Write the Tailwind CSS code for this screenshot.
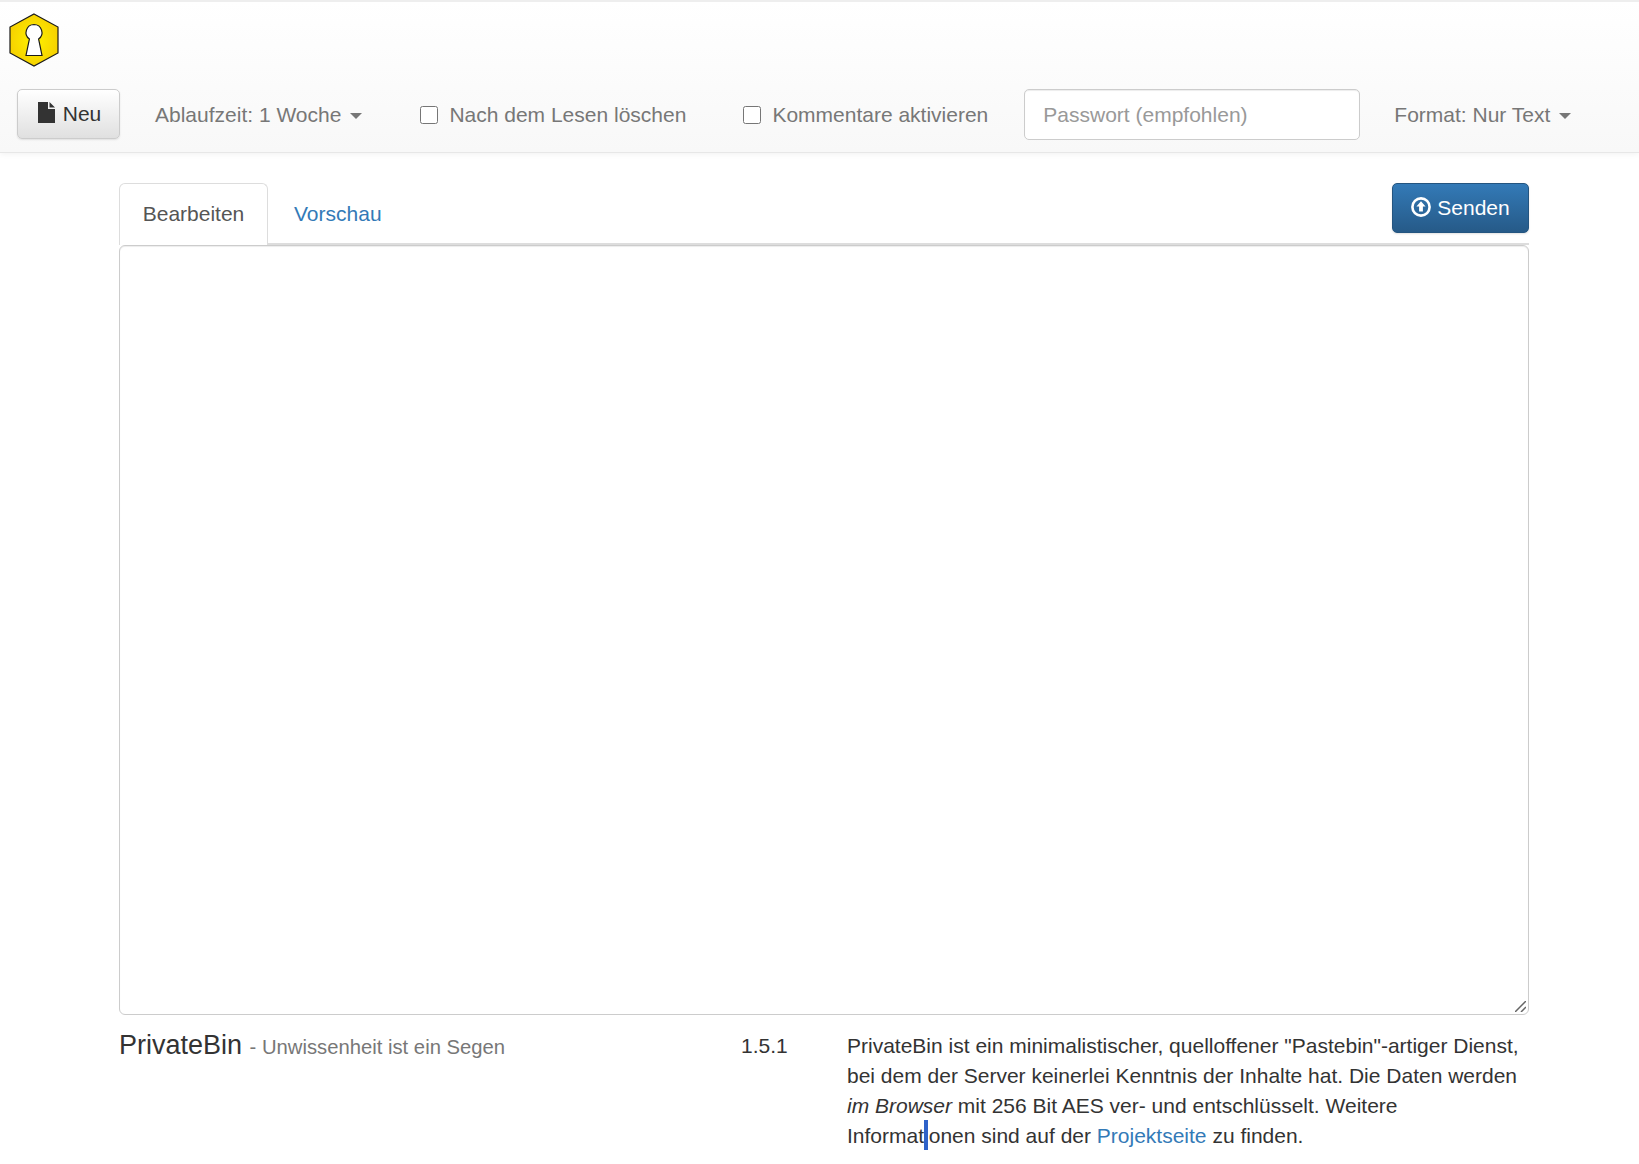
<!DOCTYPE html>
<html lang="de">
<head>
  <meta charset="UTF-8" />
  <meta name="viewport" content="width=device-width, initial-scale=1.0"/>
  <title>PrivateBin</title>
  <script src="https://cdn.jsdelivr.net/npm/@tailwindcss/browser@4"></script>
</head>
<body class="bg-white text-[#333] font-['Liberation_Sans',Arial,sans-serif] text-[21px] leading-[30px] h-[1164px] overflow-hidden">

  <!-- Navbar -->
  <nav class="h-[153px] border-t-2 border-b border-t-[#eeeeee] border-b-[#e7e7e7] bg-gradient-to-b from-white to-[#f8f8f8] shadow-[0_1px_6px_rgba(0,0,0,0.06)]">
    <!-- Logo -->
    <div class="h-[87px] pl-[9px] pt-[11px]">
      <svg width="50" height="54" viewBox="0 0 50 54">
        <defs>
          <radialGradient id="hex" cx="50%" cy="50%" r="55%">
            <stop offset="0%" stop-color="#fff200"/>
            <stop offset="100%" stop-color="#f5cf00"/>
          </radialGradient>
        </defs>
        <polygon points="25,1 49,14 49,40 25,53 1,40 1,14" fill="url(#hex)" stroke="#1a1a1a" stroke-width="1.2"/>
        <path d="M25 11.5a8 8 0 0 1 4.6 14.5L33 42.5H17L20.4 26A8 8 0 0 1 25 11.5z" fill="#fff" stroke="#1a1a1a" stroke-width="1.2"/>
      </svg>
    </div>

    <!-- Controls -->
    <div class="flex items-center h-[51px] text-[#777]">
      <button class="ml-[17px] self-start w-[103px] h-[50px] pl-[2px] flex items-center justify-center gap-[8px] rounded-[5px] border border-[#ccc] bg-gradient-to-b from-white to-[#e0e0e0] text-[#333] shadow-[0_1px_2px_rgba(0,0,0,0.1)]">
        <svg width="17" height="21" viewBox="0 0 17 21" class="-mt-[3px]"><path d="M0 0h10v7h7v14H0z M11.5 0L17 5.5h-5.5z" fill="#333"/></svg>
        Neu
      </button>
      <span class="ml-[35px] flex items-center">Ablaufzeit: 1 Woche<span class="ml-[9px] mt-[2px] border-x-[6px] border-t-[6px] border-x-transparent border-t-[#777]"></span></span>
      <label class="ml-[58px] flex items-center gap-[11px]"><input type="checkbox" class="w-[18px] h-[18px]" />Nach dem Lesen löschen</label>
      <label class="ml-[57px] flex items-center gap-[11px]"><input type="checkbox" class="w-[18px] h-[18px]" />Kommentare aktivieren</label>
      <input type="text" placeholder="Passwort (empfohlen)" class="ml-[36px] w-[336px] h-[51px] px-[18px] bg-white rounded-[5px] border border-[#ccc] shadow-[inset_0_1px_1px_rgba(0,0,0,0.075)] placeholder:text-[#999] placeholder:opacity-100" />
      <span class="ml-[34px] flex items-center">Format: Nur Text<span class="ml-[9px] mt-[2px] border-x-[6px] border-t-[6px] border-x-transparent border-t-[#777]"></span></span>
    </div>
  </nav>

  <main class="ml-[119px] w-[1410px]">
    <!-- Tabs -->
    <div class="mt-[30px] h-[62px] flex items-start border-b-[2px] border-[#ddd]">
      <a class="w-[149px] h-[62px] pb-[2px] flex items-center justify-center bg-white border border-b-0 border-[#ddd] rounded-t-[6px] text-[#555]">Bearbeiten</a>
      <a class="ml-[26px] h-[62px] flex items-center text-[#337ab7]">Vorschau</a>
      <button class="ml-auto w-[137px] h-[50px] flex items-center justify-center gap-[6px] rounded-[5px] border border-[#245580] bg-gradient-to-b from-[#337ab7] to-[#265a88] text-white shadow-[0_1px_2px_rgba(0,0,0,0.12)]">
        <svg width="20" height="20" viewBox="0 0 20 20" class="-mt-[2px]">
          <circle cx="10" cy="10" r="8.6" fill="none" stroke="#fff" stroke-width="2.6"/>
          <path d="M10 4.2l4.6 5.2h-2.7v5.2H8.1V9.4H5.4z" fill="#fff"/>
        </svg>
        Senden
      </button>
    </div>

    <!-- Editor -->
    <div class="relative">
      <textarea class="block w-[1410px] h-[770px] resize-none bg-white border border-[#ccc] rounded-[6px] shadow-[inset_0_1px_1px_rgba(0,0,0,0.075)]"></textarea>
      <svg width="11" height="11" viewBox="0 0 11 11" class="absolute right-[3px] bottom-[3px]">
        <path d="M0 11L11 0M6 11L11 6" stroke="#666" stroke-width="1.5" fill="none"/>
      </svg>
    </div>

    <!-- Footer -->
    <footer class="flex pt-[16px]">
      <h4 class="w-[622px] text-[27px] leading-[29px] text-[#333]">PrivateBin <small class="text-[20.25px] text-[#777]">- Unwissenheit ist ein Segen</small></h4>
      <div class="w-[106px]">1.5.1</div>
      <p class="w-[682px]">PrivateBin ist ein minimalistischer, quelloffener "Pastebin"-artiger Dienst, bei dem der Server keinerlei Kenntnis der Inhalte hat. Die Daten werden <em>im Browser</em> mit 256 Bit AES ver- und entschlüsselt. Weitere Informat<span class="relative">i<span class="absolute left-[0px] top-[-4px] w-[4px] h-[30px] bg-[#2f62c9]"></span></span>onen sind auf der <a class="text-[#337ab7]">Projektseite</a> zu finden.</p>
    </footer>
  </main>

</body>
</html>
